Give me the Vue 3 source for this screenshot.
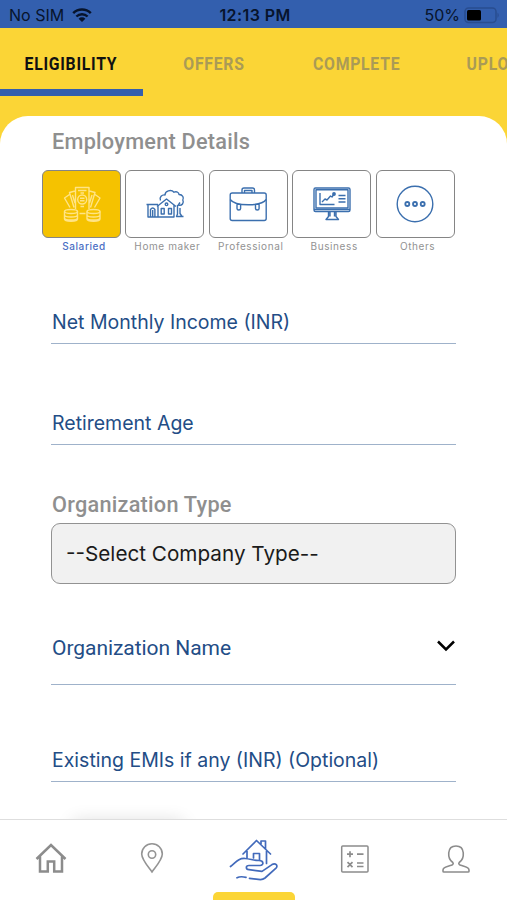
<script setup>
const tabs = ['ELIGIBILITY', 'OFFERS', 'COMPLETE', 'UPLOAD']
const types = [
  { id: 'salaried', label: 'Salaried' },
  { id: 'home', label: 'Home maker' },
  { id: 'pro', label: 'Professional' },
  { id: 'business', label: 'Business' },
  { id: 'others', label: 'Others' },
]
</script>

<template>
  <div class="screen">
    <div class="status">
      <div class="left">
        <span class="carrier">No SIM</span>
        <svg class="wifi" width="20" height="15" viewBox="0 0 20 15">
          <path d="M1.2 5.2A12.6 12.6 0 0 1 18.800 5.200" fill="none" stroke="#07142c" stroke-width="2.5" />
          <path d="M4.400 8.500A8 8 0 0 1 15.600 8.500" fill="none" stroke="#07142c" stroke-width="2.400" />
          <path d="M10 14L6.600 10.700A4.800 4.800 0 0 1 13.400 10.700Z" fill="#07142c" />
        </svg>
      </div>
      <span class="clock">12:13 PM</span>
      <div class="right">
        <span class="percent">50%</span>
        <svg width="37" height="17" viewBox="0 0 37 17">
          <rect x="1" y="1" width="31" height="14.500" rx="3.500" fill="none" stroke="#294d90" stroke-width="1.500" />
          <rect x="3" y="3" width="14" height="10.500" rx="1.500" fill="#000" />
          <path d="M33.500 5.500q2.500 2.700 0 5.400z" fill="#294d90" />
        </svg>
      </div>
    </div>

    <nav class="tabs">
      <div v-for="(t, i) in tabs" :key="t" class="tab" :class="{ active: i === 0 }">
        <span class="tab-text">{{ t }}</span>
      </div>
    </nav>

    <main class="sheet">
      <h2 class="heading">Employment Details</h2>
      <div class="types">
        <div v-for="t in types" :key="t.id" class="type" :class="t.id">
          <div class="box">
            <svg v-if="t.id === 'salaried'" width="40" height="40" viewBox="0 0 40 40" class="ico pale">
              <path d="M13.500 25V3.500h13.500V25M16 6.500h8.500M13 7L7.500 8.500l4.500 15M7.500 10.500L2.500 14l5.500 9.500M27.500 7L33 8.500l-4.500 15M33 10.500l5 3.500-5.500 9.500M10.500 11l2.500 8M30 11l-2.500 8" />
              <circle cx="20.200" cy="15.500" r="4.500" />
              <path d="M18 14.300h4.500M18 16.700h4.500M18.500 9h3.500M18.500 22.500h3.500M17.500 29.500h6" />
              <ellipse cx="9" cy="27.500" rx="6.500" ry="2" />
              <path d="M2.500 27.500v7.500c0 3 13 3 13 0v-7.500M2.500 31c0 2.700 13 2.700 13 0M2.500 34c0 2.700 13 2.700 13 0" />
              <ellipse cx="31.500" cy="27.500" rx="6.500" ry="2" />
              <path d="M25 27.500v7.500c0 3 13 3 13 0v-7.500M25 31c0 2.700 13 2.700 13 0M25 34c0 2.700 13 2.700 13 0" />
            </svg>
            <svg v-else-if="t.id === 'home'" width="40" height="40" viewBox="0 0 40 40" class="ico">
              <path d="M1.500 20.500H13M3 20.500V33h26V21M13 33V21M5.500 33v-7.500q2.200-3 4.400 0V33M7.700 26v7M12 22.500L21.500 15l9.500 7.500M16.200 24.500h3v5.500h-3zM23.500 24.500h3v5.500h-3z" />
              <circle cx="21.500" cy="20.300" r="1.300" />
              <path d="M15.500 16.500c-1.500-3.500 1.500-6 4.500-5.500 0-4 6-6 9-2.800 3-1.200 5 .6 5 2.300 4 0 5 3.500 3.800 5.500 1.500 3-.8 6-4.300 5.200M33 21.500l2-3M32.500 21v9l-1 2.500h7M35 24v5.500l2 3" />
            </svg>
            <svg v-else-if="t.id === 'pro'" width="40" height="40" viewBox="0 0 40 40" class="ico">
              <rect x="2.200" y="9" width="36" height="27.500" rx="2" />
              <path d="M14 9V6q0-2 2-2h8.500q2 0 2 2V9M16.500 9V6.500H24V9M2.200 15.500c5 7 31 7 36 0M9 20v4.500q0 1.500 1.800 1.500t1.800-1.500V21M27.500 21v3.500q0 1.500 1.800 1.500t1.800-1.500V20" />
            </svg>
            <svg v-else-if="t.id === 'business'" width="40" height="40" viewBox="0 0 40 40" class="ico">
              <rect x="2" y="4" width="36" height="23.500" rx="1.500" />
              <rect x="4" y="5.700" width="32" height="18.300" />
              <path d="M2 25.500h36M16.500 27.500v5L14 35.500h12.500L24 32.500v-5M18 27.500v5M22.500 27.500v5M8 9v11.500h14.500M10 18l3-3 2 1 3.500-4 1.500 1 2-3M26.500 11.500h7M26.500 14.700h7M26.500 18h7" />
              <circle cx="22" cy="10" r="1.200" fill="#3b6fae" />
            </svg>
            <svg v-else width="40" height="40" viewBox="0 0 40 40" class="ico">
              <circle cx="20" cy="20" r="17.800" />
              <g stroke-width="1.800"><circle cx="12.300" cy="20" r="2" /><circle cx="20" cy="20" r="2" /><circle cx="27.700" cy="20" r="2" /></g>
            </svg>
          </div>
          <span class="type-label">{{ t.label }}</span>
        </div>
      </div>

      <div class="field income">Net Monthly Income (INR)</div>
      <div class="field age">Retirement Age</div>
      <h2 class="heading org">Organization Type</h2>
      <div class="select">--Select Company Type--</div>
      <div class="field name">
        <span>Organization Name</span>
        <svg width="20" height="14" viewBox="0 0 20 14">
          <path d="M2 2.500l8 8 8-8" fill="none" stroke="#000" stroke-width="2.500" />
        </svg>
      </div>
      <div class="field emi">Existing EMIs if any (INR) (Optional)</div>
      <div class="submit"></div>
    </main>

    <footer class="bottom">
      <div class="item">
        <svg width="32" height="32" viewBox="0 0 32 32" fill="none" stroke="#8c8c8c" stroke-width="2.500">
          <path d="M1.500 17L16 3l14.500 14M5 14.500V29.500h7.800V19.500h6.400v10H27V14.500" />
        </svg>
      </div>
      <div class="item">
        <svg width="24" height="32" viewBox="0 0 24 32" fill="none" stroke="#949494" stroke-width="1.600">
          <path d="M12 30C8 24.500 1.700 17.500 1.700 12a10.300 10.300 0 0 1 20.600 0C22.300 17.500 16 24.500 12 30z" />
          <circle cx="12" cy="12.500" r="3.700" />
        </svg>
      </div>
      <div class="item current">
        <svg width="50" height="44" viewBox="0 0 50 44" fill="none" stroke="#426abb" stroke-width="1.700" stroke-linecap="round" stroke-linejoin="round">
          <path d="M14 16L27.500 2.500 41.500 16M18 13v7M37.500 13v12.500M32 6V3h4.500v8M24.500 20v-4.500h6V22" />
          <path d="M1.500 28.500C7 24.500 9 20 16 20.500c6 .5 8 2 14 2 5 0 5 5 1 5H20c-3.500 0-3.500 3.800 0 4.200l13 1.700 10-6.800c3.500-2 6.500 1 4 3.500L36 40q-2 1.600-4.500 1.600l-11-1.200M8 39.800c3-1.700 6-1.200 9-.5" />
        </svg>
        <span class="marker"></span>
      </div>
      <div class="item">
        <svg class="calc" width="30" height="30" viewBox="0 0 30 30" fill="none" stroke="#8c8c8c" stroke-width="1.500">
          <rect x="1.700" y="2" width="26.300" height="26" rx="1" />
          <path d="M7 10.200h6M10 7.200v6M17 10.200h6.500M7.500 18.200l5 5M12.500 18.200l-5 5M17 19h6.500M17 22.500h6.500" stroke-width="1.700" />
        </svg>
      </div>
      <div class="item">
        <svg class="person" width="30" height="30" viewBox="0 0 30 30" fill="none" stroke="#8c8c8c" stroke-width="1.600" stroke-linejoin="round">
          <path d="M11.800 18.500C6.200 14.500 5.500 2 15 2s8.800 12.500 3.200 16.500c-1 1 0 2.300 1.500 2.800 4 1.300 8.300 1.700 8.300 4.700v1.200q0 .8-1 .8H3q-1 0-1-.8V26c0-3 4.300-3.400 8.300-4.700 1.500-.5 2.500-1.800 1.500-2.800z" />
        </svg>
      </div>
    </footer>
  </div>
</template>

<style>
body { background: #fbd536; }
</style>

<style scoped>
.screen { width: 507px; height: 900px; display: flex; flex-direction: column; overflow: hidden; background: #fbd536; font-family: Inter, "Liberation Sans", sans-serif; white-space: nowrap; }
.status { height: 28px; flex: none; background: #335fae; display: grid; grid-template-columns: 1fr auto 1fr; align-items: center; padding: 2px 6px 0 9px; box-sizing: border-box; color: #07142c; font-size: 16px; line-height: 24px; }
.left, .right { display: flex; align-items: center; }
.left { gap: 8px; }
.right { justify-content: flex-end; gap: 4px; }
.clock { font-weight: 600; letter-spacing: 0.400px; }
.tabs { height: 68px; flex: none; display: flex; overflow: hidden; }
.tab { flex: 0 0 142.500px; height: 68px; box-sizing: border-box; display: flex; justify-content: center; border-bottom: 7px solid transparent; padding: 24px 0 0; color: #aa9b56; font: 700 19px/24px Roboto, sans-serif; letter-spacing: 0.900px; }
.tab.active { color: #111; border-bottom-color: #335fae; }
.tab-text { transform: scaleX(0.830); }
.sheet { margin-top: 20px; flex: 1; min-height: 0; overflow: hidden; background: #fff; border-radius: 28px 28px 0 0; padding: 0 51px; display: flex; flex-direction: column; }
.heading { flex: none; margin: 13px 0 0 1px; font: 500 21.700px/26px Roboto, sans-serif; letter-spacing: 0.250px; color: #8f8f8f; }
.types { flex: none; display: flex; gap: 4.400px; margin: 14.500px 0 0 -9px; }
.type { flex: 0 0 79px; display: flex; flex-direction: column; }
.box { height: 68px; box-sizing: border-box; border: 1.500px solid #858585; border-radius: 6px; display: flex; align-items: center; justify-content: center; background: #fff; }
.salaried .box { background: #f5c200; }
.ico { fill: none; stroke: #3b6fae; stroke-width: 1.400; stroke-linejoin: round; }
.ico.pale { stroke: #ffe486; stroke-width: 1.400; }
.type-label { align-self: center; margin-left: 5px; margin-top: 2px; font-size: 10px; line-height: 13px; letter-spacing: 0.600px; color: #929292; }
.salaried .type-label { color: #4b6fc4; font-weight: 500; }
.field { flex: none; box-sizing: border-box; border-bottom: 1.500px solid #9fb2ca; color: #234d86; padding-left: 1px; font-size: 19.500px; line-height: 26px; display: flex; align-items: flex-start; justify-content: space-between; }
.income { margin-top: 56.500px; height: 35px; }
.age { margin-top: 65.500px; height: 35.500px; }
.org { margin-top: 46.500px; }
.select { flex: none; box-sizing: border-box; margin-top: 5.500px; height: 61px; border: 1.500px solid #929292; border-radius: 9px; background: #f1f1f1; display: flex; align-items: center; padding: 0 14px 1px; font-size: 20.700px; color: #1b1b1b; }
.name { margin-top: 51px; height: 50px; font-family: Roboto, sans-serif; font-size: 21px; letter-spacing: -0.050px; }
.name svg { margin-top: 4px; }
.emi { margin-top: 62px; height: 35px; }
.submit { flex: none; align-self: flex-start; margin: 43px 0 0 26px; width: 102px; height: 40px; box-shadow: 0 0 18px 4px rgba(0, 0, 0, 0.140); }
.bottom { flex: none; height: 81px; box-sizing: border-box; border-top: 1.500px solid #dedede; background: #fff; display: flex; }
.item { position: relative; flex: 1; display: flex; align-items: center; justify-content: center; padding-bottom: 4px; }
.current { padding-bottom: 0; }
.calc, .person { margin-top: 2px; }
.marker { position: absolute; bottom: 0; left: 50%; width: 82px; height: 8px; margin-left: -41px; background: #fbd536; border-radius: 5px 5px 0 0; }
</style>
